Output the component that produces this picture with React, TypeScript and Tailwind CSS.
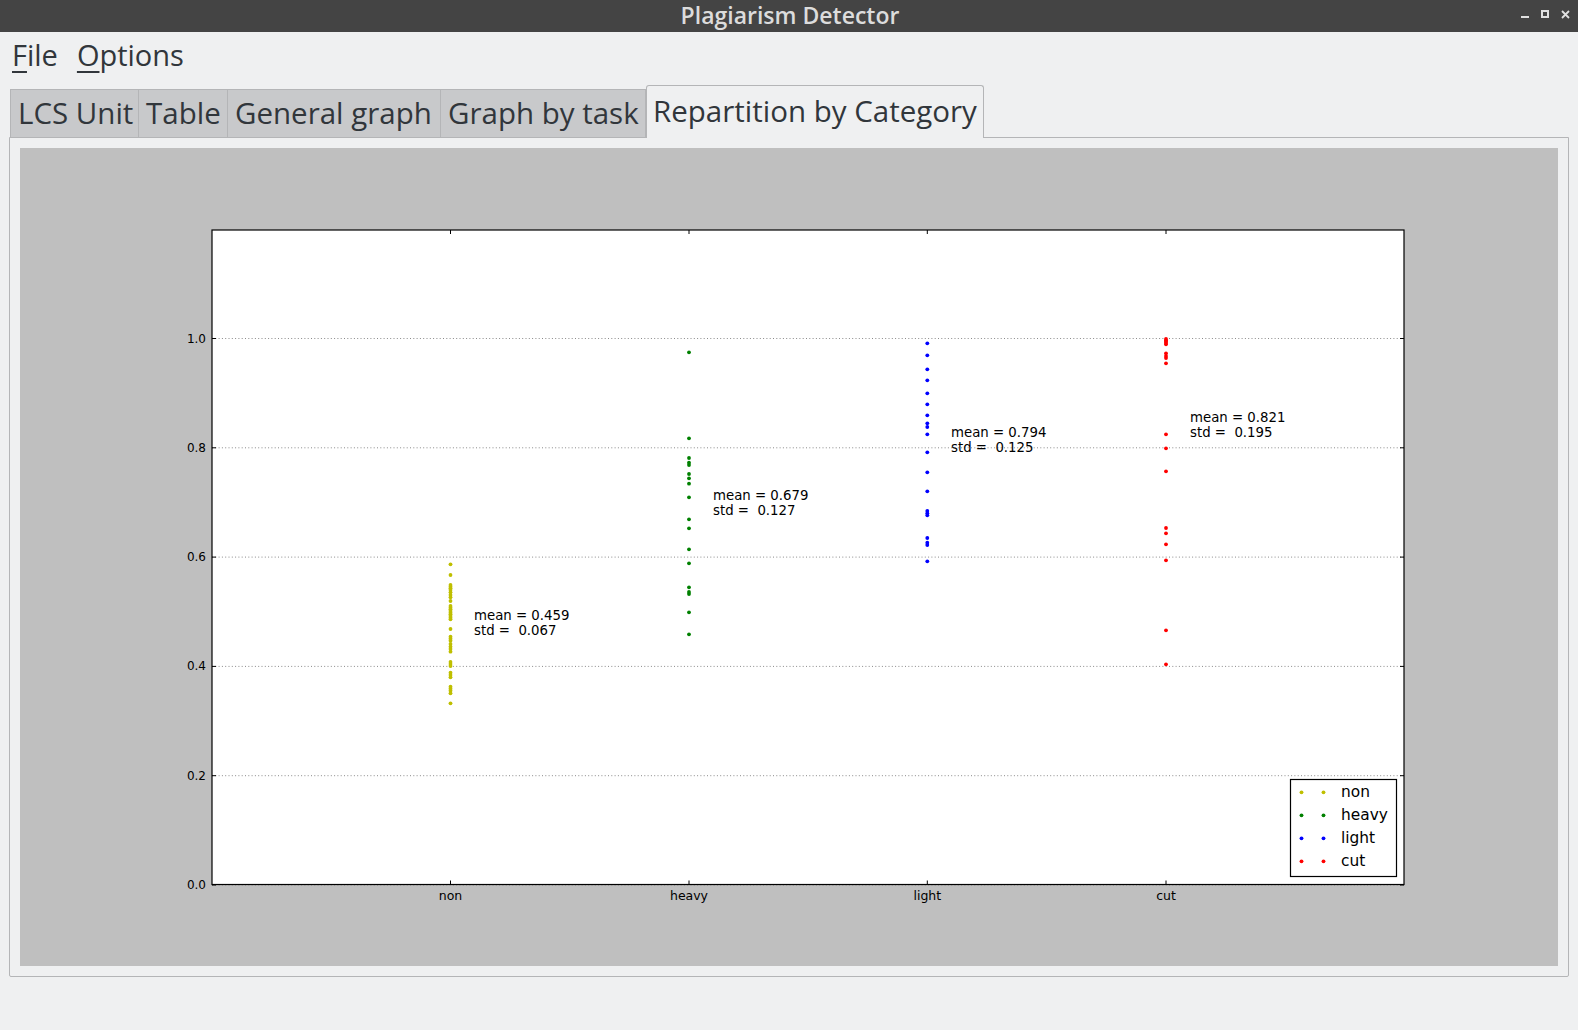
import React from "react";

// pixel positions of the plotted samples (page coordinates)
const series = [
  {
    name: "non",
    color: "#bfbf00",
    x: 450.5,
    ys: [564.3, 575, 585, 586.7, 588.3, 590, 592.3, 595, 597.3, 601, 606, 607.7, 609.3, 611, 612.7, 614.3, 616, 617.7, 619.3, 629, 636.7, 638.7, 640.7, 644, 646.7, 649, 651.7, 662, 664, 666, 672.7, 675, 677.3, 686.7, 688.7, 690.7, 693.3, 703.3],
    mean: "mean = 0.459",
    std: "std =  0.067",
    tx: 474,
    ty: 615,
  },
  {
    name: "heavy",
    color: "#008000",
    x: 689,
    ys: [352.3, 438.3, 458, 462.7, 465, 474, 478.3, 483.7, 497.3, 519.3, 528.3, 549.3, 563.3, 587.3, 592, 594, 612.3, 634.3],
    mean: "mean = 0.679",
    std: "std =  0.127",
    tx: 713,
    ty: 495,
  },
  {
    name: "light",
    color: "#0000ff",
    x: 927.3,
    ys: [343.3, 355.3, 369.3, 380.3, 393.3, 404.3, 415.3, 423.3, 427, 434.3, 452.3, 472.3, 491.3, 511, 513.3, 515.3, 538, 542.7, 545, 561.3],
    mean: "mean = 0.794",
    std: "std =  0.125",
    tx: 951,
    ty: 432,
  },
  {
    name: "cut",
    color: "#ff0000",
    x: 1166,
    ys: [339, 340.3, 341.7, 343, 344.3, 353.3, 356, 358, 363.3, 434.3, 448.3, 471.3, 528, 533.3, 544.3, 560.3, 630.3, 664.3],
    mean: "mean = 0.821",
    std: "std =  0.195",
    tx: 1190,
    ty: 417,
  },
];

const L = 212;
const R = 1404;
const T = 230;
const B = 884.5;
const yOf = (v: number) => 885 - v * 546.5;
const gridVals = [0, 0.2, 0.4, 0.6, 0.8, 1.0];

const tabs = [
  { label: "LCS Unit", w: "w-[129px]" },
  { label: "Table", w: "w-[89px]" },
  { label: "General graph", w: "w-[213px]" },
  { label: "Graph by task", w: "w-[205px]" },
];

const Chart = () => (
  <svg
    viewBox="20 148 1538 818"
    width={1538}
    height={818}
    className="block"
    style={{ fontFamily: "'DejaVu Sans', sans-serif" }}
  >
    <rect x={20} y={148} width={1538} height={818} fill="#bfbfbf" />
    <rect x={L} y={T} width={R - L} height={B - T} fill="#ffffff" />

    {/* grid */}
    {gridVals.map((v) => (
      <line
        key={v}
        x1={L}
        x2={R}
        y1={yOf(v)}
        y2={yOf(v)}
        stroke="#8a8a8a"
        strokeWidth={1}
        strokeDasharray="1 2.3"
      />
    ))}

    {/* ticks */}
    {gridVals.map((v) => (
      <g key={"t" + v} stroke="#000" strokeWidth={1}>
        <line x1={L} x2={L + 4} y1={yOf(v)} y2={yOf(v)} />
        <line x1={R - 4} x2={R} y1={yOf(v)} y2={yOf(v)} />
      </g>
    ))}
    {series.map((s) => (
      <g key={"xt" + s.name} stroke="#000" strokeWidth={1}>
        <line x1={s.x} x2={s.x} y1={T} y2={T + 4} />
        <line x1={s.x} x2={s.x} y1={B - 4} y2={B} />
      </g>
    ))}

    {/* y labels */}
    {gridVals.map((v) => (
      <text
        key={"l" + v}
        x={206}
        y={yOf(v)}
        textAnchor="end"
        dominantBaseline="central"
        fontSize={12}
        fill="#000"
      >
        {v.toFixed(1)}
      </text>
    ))}

    {/* x labels */}
    {series.map((s) => (
      <text
        key={"xl" + s.name}
        x={s.x}
        y={895}
        textAnchor="middle"
        dominantBaseline="central"
        fontSize={12.5}
        fill="#000"
      >
        {s.name}
      </text>
    ))}

    {/* points + annotations */}
    {series.map((s) => (
      <g key={"p" + s.name}>
        {s.ys.map((y, i) => (
          <circle key={i} cx={s.x} cy={y} r={1.9} fill={s.color} />
        ))}
        <text
          x={s.tx}
          y={s.ty}
          dominantBaseline="central"
          fontSize={13.3}
          fill="#000"
          style={{ whiteSpace: "pre" }}
        >
          {s.mean}
        </text>
        <text
          x={s.tx}
          y={s.ty + 15}
          dominantBaseline="central"
          fontSize={13.3}
          fill="#000"
          style={{ whiteSpace: "pre" }}
        >
          {s.std}
        </text>
      </g>
    ))}

    {/* frame */}
    <rect x={L} y={T} width={R - L} height={B - T} fill="none" stroke="#000" strokeWidth={1.2} />

    {/* legend */}
    <rect x={1290.5} y={779.5} width={106} height={97} fill="#fff" stroke="#000" strokeWidth={1.2} />
    {series.map((s, i) => (
      <g key={"lg" + s.name}>
        <circle cx={1301.5} cy={792.3 + i * 23} r={1.9} fill={s.color} />
        <circle cx={1323.5} cy={792.3 + i * 23} r={1.9} fill={s.color} />
        <text
          x={1341}
          y={792.3 + i * 23}
          dominantBaseline="central"
          fontSize={15.4}
          fill="#000"
        >
          {s.name}
        </text>
      </g>
    ))}
  </svg>
);

const App = () => {
  return (
    <div
      className="w-[1578px] h-[1030px] bg-[#eff0f1] flex flex-col overflow-hidden text-[#31363b]"
      style={{ fontFamily: "'Open Sans', 'Noto Sans', sans-serif" }}
    >
      {/* title bar */}
      <div className="h-[32px] bg-[#444444] flex items-center relative shrink-0">
        <div className="flex-1 text-center text-[23px] font-semibold text-[#dcdcdc] leading-none pl-[2px] pb-[1px]">
          Plagiarism Detector
        </div>
        <div className="absolute right-[8px] top-[10px] flex items-start gap-[12px] text-[#e0e0e0]">
          <div className="w-[8px] h-[8px] flex items-end">
            <div className="w-[8px] h-[2px] bg-[#e0e0e0]" />
          </div>
          <div className="w-[8px] h-[8px] border-2 border-[#e0e0e0]" />
          <svg width={9} height={9} viewBox="0 0 9 9">
            <path d="M1 1 L8 8 M8 1 L1 8" stroke="#e0e0e0" strokeWidth={1.8} />
          </svg>
        </div>
      </div>

      {/* menu bar */}
      <div className="h-[53px] flex items-center pl-[12px] gap-[19px] text-[29px] leading-none shrink-0 pb-[8px]">
        <span>
          <span className="underline underline-offset-[5px] decoration-[1.5px]">F</span>ile
        </span>
        <span>
          <span className="underline underline-offset-[5px] decoration-[1.5px]">O</span>ptions
        </span>
      </div>

      {/* tabs */}
      <div className="h-[52px] flex items-end pl-[10px] shrink-0 relative z-10">
        {tabs.map((t, i) => (
          <div
            key={t.label}
            className={`${t.w} h-[48px] bg-[#c8c9cb] border-t border-[#b4b5b7] ${
              i === 0 ? "border-l" : ""
            } border-r flex items-center pl-[7px] text-[29.5px] leading-none pb-[1px] whitespace-nowrap`}
          >
            {t.label}
          </div>
        ))}
        <div className="w-[338px] h-[53px] -mb-px bg-[#eff0f1] border border-b-0 border-[#b4b5b7] rounded-t-[3px] flex items-center pl-[6px] text-[29.5px] leading-none pb-[2px] whitespace-nowrap">
          Repartition by Category
        </div>
      </div>

      {/* tab pane */}
      <div className="ml-[9px] w-[1560px] border border-[#b4b5b7] rounded-b-[2px] p-[10px] bg-[#eff0f1] shrink-0">
        <Chart />
      </div>
    </div>
  );
};

export default App;
